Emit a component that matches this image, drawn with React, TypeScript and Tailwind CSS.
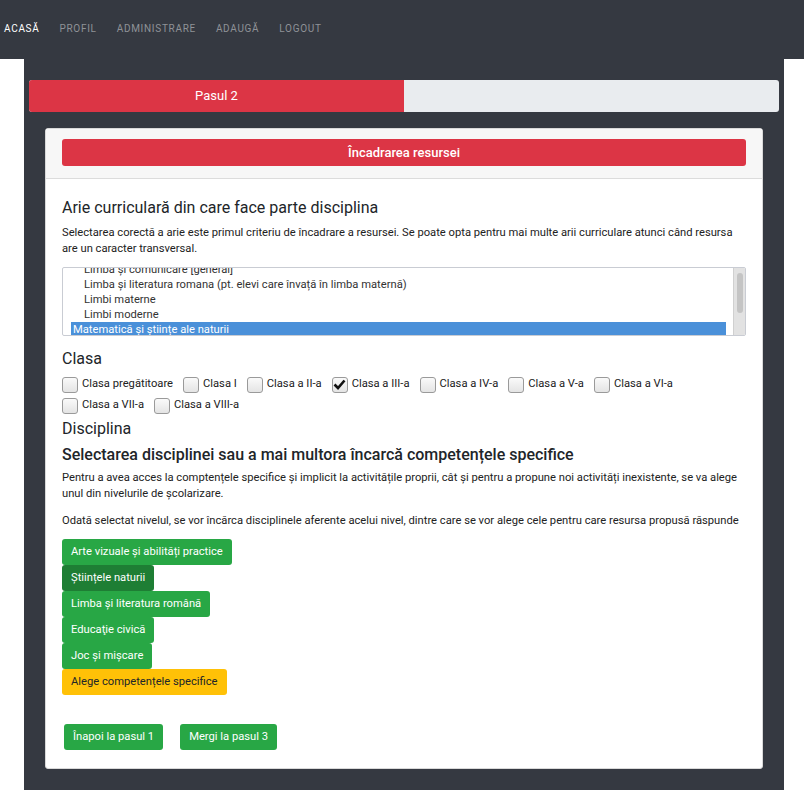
import React from "react";

const font = { fontFamily: "Roboto, 'Liberation Sans', sans-serif" };

const navItems = ["Acasă", "Profil", "Administrare", "Adaugă", "Logout"];

const clase = [
  "Clasa pregătitoare",
  "Clasa I",
  "Clasa a II-a",
  "Clasa a III-a",
  "Clasa a IV-a",
  "Clasa a V-a",
  "Clasa a VI-a",
  "Clasa a VII-a",
  "Clasa a VIII-a",
];

const discipline = [
  { name: "Arte vizuale și abilități practice", active: false },
  { name: "Științele naturii", active: true },
  { name: "Limba și literatura română", active: false },
  { name: "Educaţie civică", active: false },
  { name: "Joc și mișcare", active: false },
];

function Checkbox({ label, checked }: { label: string; checked?: boolean }) {
  return (
    <label className="flex items-center mr-[10px] h-[21px]">
      <span className="w-[16px] h-[16px] rounded-[3px] border border-[#9a9a9a] bg-gradient-to-b from-[#fafafa] to-[#e4e4e4] flex items-center justify-center mr-[4px]">
        {checked && (
          <svg width="13" height="11" viewBox="0 0 13 11">
            <path d="M1.5 5.5 L5 9 L11.5 1.5" stroke="#111" strokeWidth="2.6" fill="none" />
          </svg>
        )}
      </span>
      <span className="text-[11.2px] text-[#222]">{label}</span>
    </label>
  );
}

export default function App() {
  return (
    <div style={font} className="w-[804px] min-h-[799px] bg-white">
      <nav className="h-[59px] bg-[#353941] flex items-center pl-[4px] gap-[20px] pb-[2px]">
        {navItems.map((n, i) => (
          <span
            key={n}
            className={`uppercase text-[10px] tracking-[0.7px] ${i === 0 ? "text-white" : "text-[#8f9297]"}`}
          >
            {n}
          </span>
        ))}
      </nav>

      <div className="ml-[24px] mr-[20px] bg-[#353941] pt-[21px] pb-[21px]">
        <div className="mx-[5px] h-[32px] bg-[#e9ecef] rounded-[3px] flex overflow-hidden">
          <div className="w-[375px] bg-[#dc3545] flex items-center justify-center text-white text-[13px]">
            Pasul 2
          </div>
        </div>

        <div className="mx-[21px] mt-[16px] bg-white border border-[#d9d9d9] rounded-[3px] text-[#212529]">
          <div className="bg-[#f7f7f7] border-b border-[#dcdcdc] px-[16px] pt-[10px] pb-[12px]">
            <div className="h-[27px] bg-[#dc3545] rounded-[3px] flex items-center justify-center text-white text-[13px] font-medium">
              Încadrarea resursei
            </div>
          </div>

          <div className="px-[16px] pt-[17px] pb-[18px]">
            <h2 className="text-[16px] leading-[24px]">Arie curriculară din care face parte disciplina</h2>
            <p className="text-[11.2px] leading-[16px] mt-[5px] text-[#222]">
              Selectarea corectă a arie este primul criteriu de încadrare a resursei. Se poate opta pentru mai multe arii
              curriculare atunci când resursa are un caracter transversal.
            </p>

            <div className="mt-[10px] h-[69px] border border-[#c9ccd3] rounded-[2px] flex overflow-hidden">
              <div className="flex-1 overflow-hidden pl-[8px] pr-[7px]">
                <div className="-mt-[6px] text-[11.2px] leading-[15px] text-[#333]">
                  <div className="pl-[13px]">Limba și comunicare [general]</div>
                  <div className="pl-[13px]">Limba și literatura romana (pt. elevi care învață în limba maternă)</div>
                  <div className="pl-[13px]">Limbi materne</div>
                  <div className="pl-[13px]">Limbi moderne</div>
                  <div className="pl-[2px] bg-[#4a90d9] text-white">Matematică și științe ale naturii</div>
                </div>
              </div>
              <div className="w-[12px] bg-[#e2e2e2] border-l border-[#d0d0d0] pt-[5px] flex justify-center">
                <div className="w-[6px] h-[40px] rounded-full bg-[#c4c4c4]" />
              </div>
            </div>

            <h2 className="text-[16px] leading-[24px] mt-[11px]">Clasa</h2>
            <div className="flex flex-wrap mt-[3px]">
              {clase.map((c) => (
                <Checkbox key={c} label={c} checked={c === "Clasa a III-a"} />
              ))}
            </div>

            <h2 className="text-[16px] leading-[24px] mt-[1px]">Disciplina</h2>
            <h3 className="text-[16px] leading-[24px] font-medium mt-[2px]">
              Selectarea disciplinei sau a mai multora încarcă competențele specifice
            </h3>
            <p className="text-[11.2px] leading-[16px] mt-[3px] text-[#222]">
              Pentru a avea acces la comptențele specifice și implicit la activitățile proprii, cât și pentru a propune noi
              activități inexistente, se va alege unul din nivelurile de școlarizare.
            </p>
            <p className="text-[11.2px] leading-[16px] mt-[11px] text-[#222]">
              Odată selectat nivelul, se vor încărca disciplinele aferente acelui nivel, dintre care se vor alege cele pentru
              care resursa propusă răspunde
            </p>

            <div className="flex flex-col items-start mt-[10px]">
              {discipline.map((d) => (
                <button
                  key={d.name}
                  className={`h-[26px] px-[9px] rounded-[3px] text-[11.2px] text-white ${d.active ? "bg-[#1e7e34]" : "bg-[#28a745]"}`}
                >
                  {d.name}
                </button>
              ))}
              <button className="h-[26px] px-[9px] rounded-[3px] text-[11.2px] text-[#212529] bg-[#ffc107]">
                Alege competențele specifice
              </button>
            </div>

            <div className="flex gap-[17px] mt-[29px] ml-[2px]">
              <button className="h-[26px] px-[9px] rounded-[3px] text-[11.2px] text-white bg-[#28a745]">
                Înapoi la pasul 1
              </button>
              <button className="h-[26px] px-[9px] rounded-[3px] text-[11.2px] text-white bg-[#28a745]">
                Mergi la pasul 3
              </button>
            </div>
          </div>
        </div>
      </div>
    </div>
  );
}
